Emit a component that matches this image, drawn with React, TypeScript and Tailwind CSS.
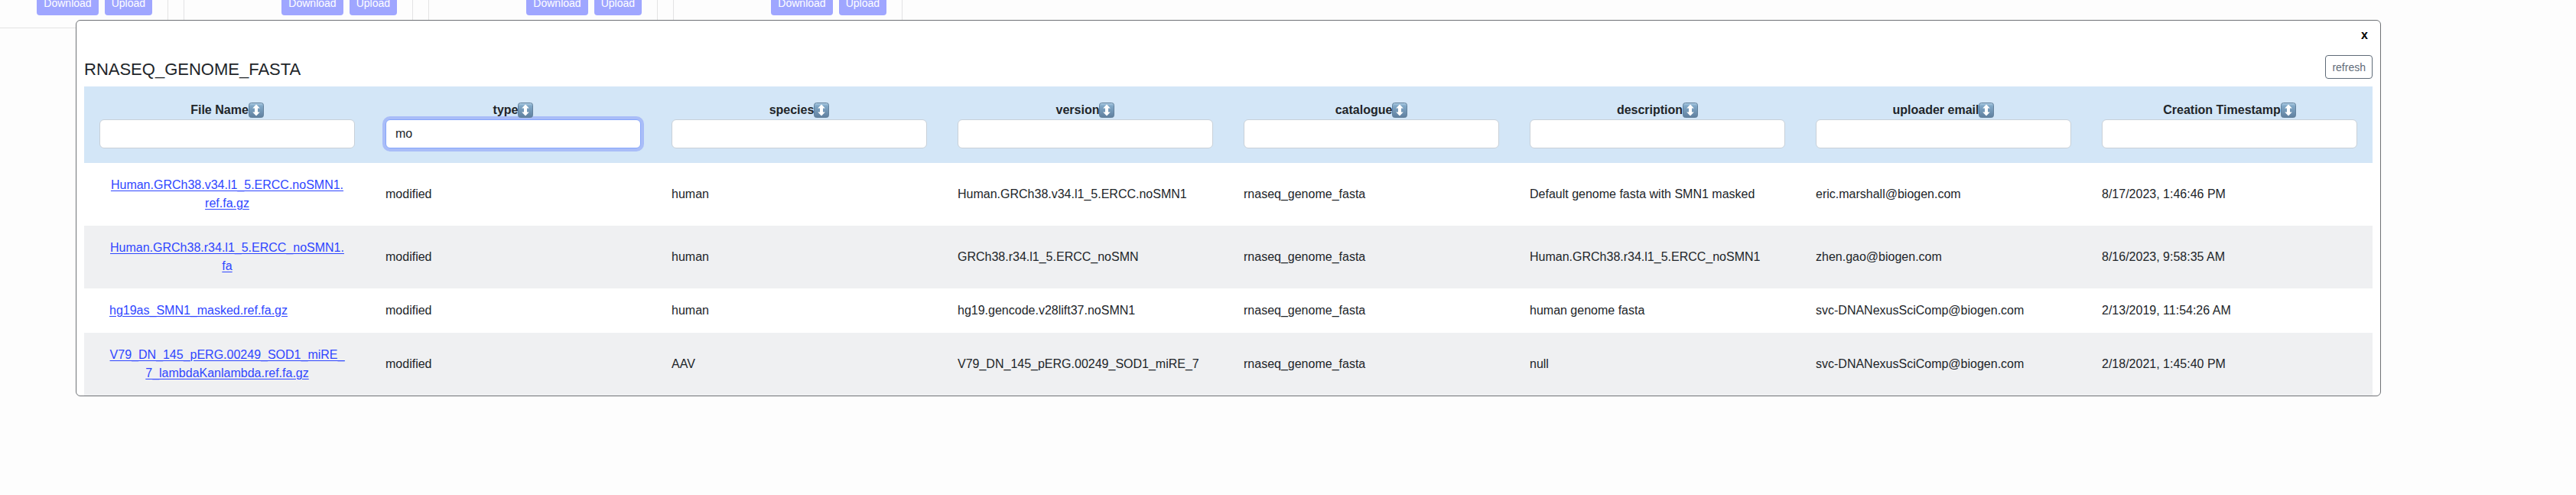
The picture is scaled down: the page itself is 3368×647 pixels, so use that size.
import { useId, useState } from "react";

const columns = [
  { key: "file", label: "File Name" },
  { key: "type", label: "type" },
  { key: "species", label: "species" },
  { key: "version", label: "version" },
  { key: "catalogue", label: "catalogue" },
  { key: "description", label: "description" },
  { key: "email", label: "uploader email" },
  { key: "created", label: "Creation Timestamp" },
];

const rows = [
  ["Human.GRCh38.v34.l1_5.ERCC.noSMN1.ref.fa.gz", "modified", "human", "Human.GRCh38.v34.l1_5.ERCC.noSMN1", "rnaseq_genome_fasta", "Default genome fasta with SMN1 masked", "eric.marshall@biogen.com", "8/17/2023, 1:46:46 PM"],
  ["Human.GRCh38.r34.l1_5.ERCC_noSMN1.fa", "modified", "human", "GRCh38.r34.l1_5.ERCC_noSMN", "rnaseq_genome_fasta", "Human.GRCh38.r34.l1_5.ERCC_noSMN1", "zhen.gao@biogen.com", "8/16/2023, 9:58:35 AM"],
  ["hg19as_SMN1_masked.ref.fa.gz", "modified", "human", "hg19.gencode.v28lift37.noSMN1", "rnaseq_genome_fasta", "human genome fasta", "svc-DNANexusSciComp@biogen.com", "2/13/2019, 11:54:26 AM"],
  ["V79_DN_145_pERG.00249_SOD1_miRE_7_lambdaKanlambda.ref.fa.gz", "modified", "AAV", "V79_DN_145_pERG.00249_SOD1_miRE_7", "rnaseq_genome_fasta", "null", "svc-DNANexusSciComp@biogen.com", "2/18/2021, 1:45:40 PM"],
];

function SortIcon() {
  const gradient = useId();
  return (
    <svg viewBox="0 0 20 20" className="size-5" aria-hidden="true">
      <defs>
        <linearGradient id={gradient} x1="0" y1="0" x2="0" y2="1">
          <stop offset="0" stopColor="#b4d2e8" />
          <stop offset="0.2" stopColor="#82a9c8" />
          <stop offset="1" stopColor="#5f7f9e" />
        </linearGradient>
      </defs>
      <rect x="0.5" y="0.5" width="19" height="19" rx="3" fill={`url(#${gradient})`} stroke="#64829d" />
      <path d="M10 2.5 14.8 7.6H12v4.8h2.8L10 17.5 5.2 12.4H8V7.6H5.2Z" fill="#fff" />
    </svg>
  );
}

function CatalogueCard() {
  return (
    <div className="mr-5 flex h-[37px] w-[300px] shrink-0 items-start justify-end gap-2 border border-t-0 border-[#e3e3e4] pr-5">
      <button className="-mt-3 h-8 rounded bg-[#9fa6ff] px-[9px] text-sm text-white">Download</button>
      <button className="-mt-3 h-8 rounded bg-[#9fa6ff] px-[9px] text-sm text-white">Upload</button>
    </div>
  );
}

function ColumnHeader({ id, label, value, onChange }: { id: string; label: string; value: string; onChange: (v: string) => void }) {
  return (
    <th scope="col" className="px-5 py-[19px] font-bold">
      <div className="flex h-6 items-center justify-center">
        <label htmlFor={id}>{label}</label>
        <button aria-label={`Sort by ${label}`}>
          <SortIcon />
        </button>
      </div>
      <input
        id={id}
        type="text"
        autoFocus={id === "type"}
        value={value}
        onChange={(e) => onChange(e.target.value)}
        className={
          "block h-[38px] w-full rounded-md border bg-white px-3 font-normal caret-transparent outline-none " +
          (id === "type" ? "border-[#86a6fb] ring-4 ring-[#a9bdf8]" : "border-[#c8d0d8]")
        }
      />
    </th>
  );
}

export default function App() {
  const [filters, setFilters] = useState<Record<string, string>>({ type: "mo" });
  return (
    <div className="relative min-h-screen overflow-hidden bg-[#fdfdfd] font-['Liberation_Sans',Arial,sans-serif] text-base leading-6 text-[#212529]">
      <div className="-ml-20 flex">
        <CatalogueCard />
        <CatalogueCard />
        <CatalogueCard />
        <CatalogueCard />
      </div>
      <section
        role="dialog"
        aria-labelledby="dialog-title"
        className="absolute top-[26px] right-[255px] left-[99px] rounded-md border border-[#6f7276] bg-white px-2.5"
      >
        <div className="flex h-[38px] items-center justify-end pr-1.5">
          <button className="text-base font-bold text-black" aria-label="Close">x</button>
        </div>
        <header className="flex items-start justify-between pt-[7px] pb-[3px]">
          <h1 id="dialog-title" className="text-[22px] leading-[38px]">RNASEQ_GENOME_FASTA</h1>
          <button className="h-[31px] rounded border border-[#5f6b78] px-2 text-sm text-[#5f6b78]">refresh</button>
        </header>
        <table className="w-full table-fixed border-collapse text-left">
          <thead className="bg-[#d3e6f7]">
            <tr>
              {columns.map((c) => (
                <ColumnHeader
                  key={c.key}
                  id={c.key}
                  label={c.label}
                  value={filters[c.key] ?? ""}
                  onChange={(v) => setFilters({ ...filters, [c.key]: v })}
                />
              ))}
            </tr>
          </thead>
          <tbody>
            {rows.map(([file, ...cells]) => (
              <tr key={file} className="even:bg-[#eff0f2]">
                <td className="px-5 py-2.5">
                  <a href="#" className="inline-block px-[13px] py-[7px] text-center break-all text-[#2f46ff] underline underline-offset-2">
                    {file}
                  </a>
                </td>
                {cells.map((cell, i) => (
                  <td key={i} className="px-5 py-2.5">{cell}</td>
                ))}
              </tr>
            ))}
          </tbody>
        </table>
      </section>
    </div>
  );
}
